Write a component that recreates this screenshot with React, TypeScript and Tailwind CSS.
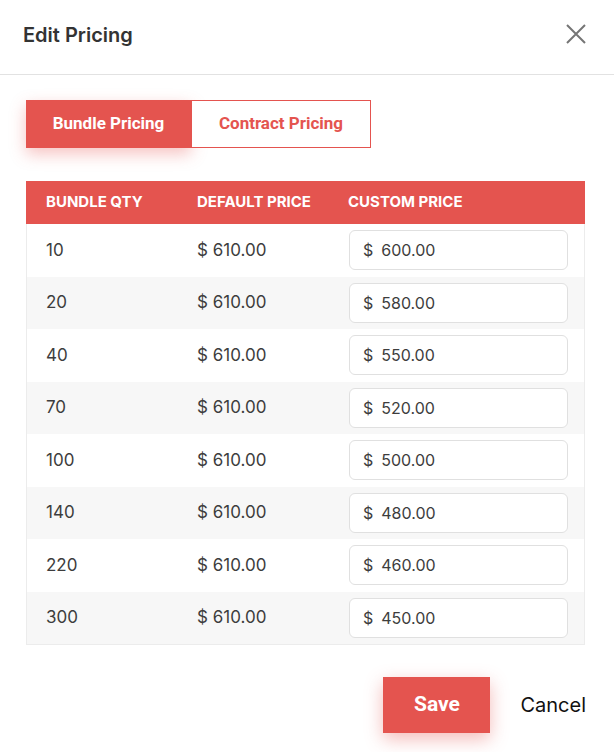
import React from "react";

const rows = [
  { qty: "10", custom: "600.00" },
  { qty: "20", custom: "580.00" },
  { qty: "40", custom: "550.00" },
  { qty: "70", custom: "520.00" },
  { qty: "100", custom: "500.00" },
  { qty: "140", custom: "480.00" },
  { qty: "220", custom: "460.00" },
  { qty: "300", custom: "450.00" },
];

export default function App() {
  return (
    <div className="w-[614px] h-[752px] bg-white overflow-hidden" style={{ fontFamily: "Inter, 'Noto Sans', sans-serif" }}>
      <div className="h-[75px] flex items-start justify-between pl-[23px] pr-[28px] pt-[20px] border-b border-[#e2e2e2]">
        <div className="text-[20px] font-semibold text-[#333333]">Edit Pricing</div>
        <svg width="20" height="20" viewBox="0 0 20 20" className="mt-[4px]" fill="none" stroke="#757575" strokeWidth="2">
          <path d="M1 1 L19 19 M19 1 L1 19" />
        </svg>
      </div>

      <div className="px-[26px] pt-[25px]">
        <div className="flex" style={{ fontFamily: "Roboto, sans-serif" }}>
          <button className="w-[165px] h-[48px] bg-[#e4544f] text-white text-[17px] font-bold shadow-[0_6px_16px_rgba(228,84,79,0.35)]">
            Bundle Pricing
          </button>
          <button className="w-[180px] h-[48px] bg-white text-[#e4544f] text-[17px] font-bold border border-[#e4544f]">
            Contract Pricing
          </button>
        </div>

        <div className="mt-[33px] w-[559px] border-l border-r border-b border-[#ececec]">
          <div className="h-[43px] bg-[#e4544f] flex items-center text-white text-[15px] font-bold -mx-px">
            <div className="w-[152px] pl-[20px]">BUNDLE QTY</div>
            <div className="w-[151px] pl-[19px]">DEFAULT PRICE</div>
            <div className="pl-[19px]">CUSTOM PRICE</div>
          </div>
          {rows.map((r, i) => (
            <div
              key={r.qty}
              className={`h-[52.5px] flex items-center text-[17px] text-[#3d3d3d] ${i % 2 === 1 ? "bg-[#f7f7f7]" : "bg-white"}`}
            >
              <div className="w-[151px] pl-[19px]">{r.qty}</div>
              <div className="w-[151px] pl-[19px]">$ 610.00</div>
              <div className="pl-[20px]">
                <div className="w-[219px] h-[40px] bg-white border border-[#e0e0e0] rounded-[6px] flex items-center pl-[13px] text-[16px]">
                  <span>$</span>
                  <span className="ml-[8px]">{r.custom}</span>
                </div>
              </div>
            </div>
          ))}
        </div>
      </div>

      <div className="flex justify-end items-center pr-[28px] mt-[32px] gap-[30px]">
        <button
          className="w-[107px] h-[56px] bg-[#e4544f] text-white text-[21px] font-bold shadow-[0_6px_18px_rgba(228,84,79,0.4)]"
          style={{ fontFamily: "Roboto, sans-serif" }}
        >
          Save
        </button>
        <button className="text-[20px] text-[#111111]">Cancel</button>
      </div>
    </div>
  );
}
